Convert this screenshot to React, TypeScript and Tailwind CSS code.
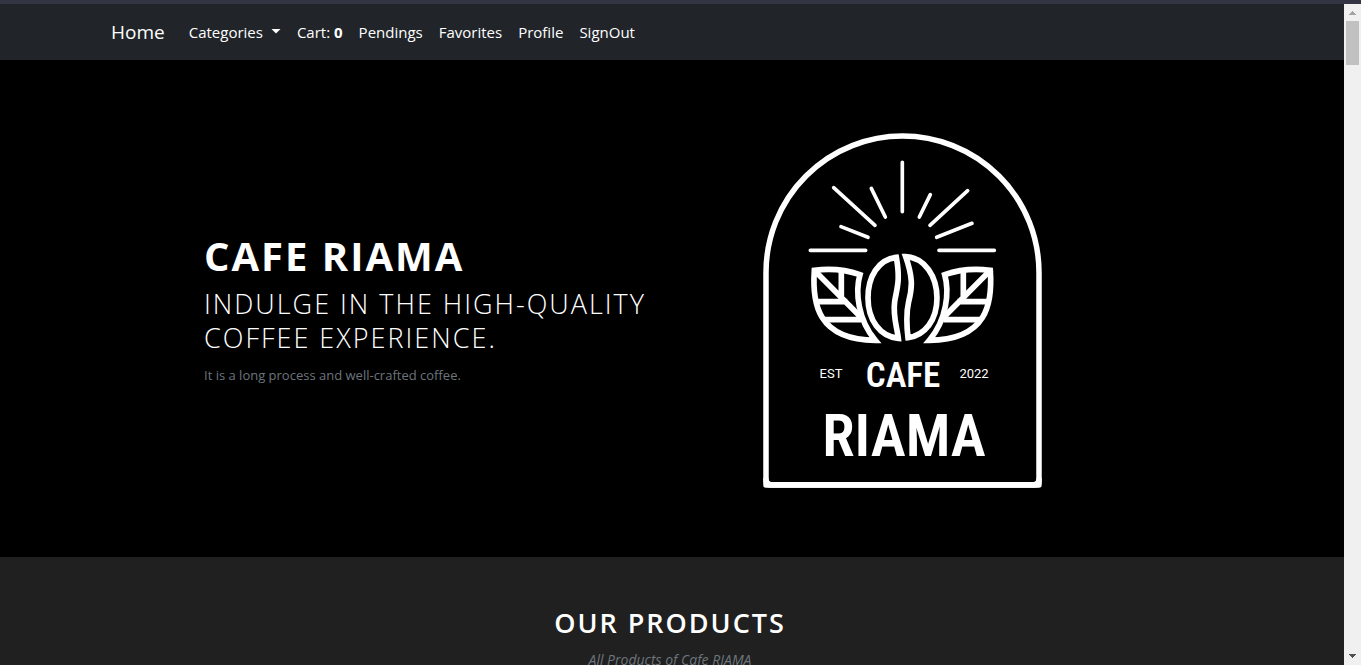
const navLinks = ["Pendings", "Favorites", "Profile", "SignOut"];

function Leaf() {
  return (
    <g>
      <path d="M43 91C95 84 140 90 180 104C165 155 174 240 226 301C52 299 36 190 43 91Z" />
      <path d="M48 96L185 234M124 92V168M52 185H142M70 239H184" />
    </g>
  );
}

function CafeLogo() {
  return (
    <svg
      viewBox="762 132 282 358"
      className="mt-1 h-[358px] w-[282px] shrink-0"
      role="img"
      aria-label="Cafe Riama, established 2022"
    >
      <path
        d="M766 481V272.5A136.5 136.5 0 0 1 1039 272.5V481Q1039 485 1035 485H770Q766 485 766 481Z"
        fill="none"
        stroke="#fff"
        strokeWidth="5.5"
      />
      <path
        d="M763.3 478V485.5Q763.3 487.700 766 487.700H1039Q1041.700 487.700 1041.700 485V478H1036.500Q1036.500 482 1033 482H772Q768.500 482 768.500 478Z"
        fill="#fff"
      />
      <g transform="translate(750 120) scale(.3333)" fill="none" stroke="#fff" strokeWidth="11" strokeLinecap="round">
        <path d="M457 127V275M251 203L375 316M364 205L406 291M541 224L508 291M653 212L540 316M273 320L354 352M666 310L560 352M181 391H347M567 391H733" />
      </g>
      <g transform="translate(800 240) scale(.3333)" fill="none" stroke="#fff" strokeWidth="17">
        <Leaf />
        <g transform="translate(614 0) scale(-1 1)">
          <Leaf />
        </g>
        <path d="M289 52C235 58 204 110 204 174C204 240 240 290 295 295C291 260 278 230 284 185C290 145 302 125 289 52Z" />
        <path d="M317 50C375 52 411 110 411 174C411 240 375 286 324 293C318 240 319 215 326 185C338 140 338 110 317 50Z" />
      </g>
      <g fill="#fff" textAnchor="middle" className="font-['Roboto_Condensed','Liberation_Sans_Narrow',sans-serif]">
        <text x="831" y="378" fontSize="13" className="font-['Roboto',sans-serif]">EST</text>
        <text x="974" y="378" fontSize="13" className="font-['Roboto',sans-serif]">2022</text>
        <text x="903" y="387" fontSize="35" fontWeight="600">CAFE</text>
        <text x="904" y="456" fontSize="59" fontWeight="600">RIAMA</text>
      </g>
    </svg>
  );
}

function Scrollbar() {
  return (
    <div aria-hidden="true" className="flex w-[17px] shrink-0 flex-col items-center justify-between bg-[#f0f0f0]">
      <div className="flex w-full flex-col items-center">
        <svg viewBox="0 0 17 17" className="size-[17px]" shapeRendering="crispEdges">
          <path d="M8 7H9V8H10V9H11V10H12V11H5V10H6V9H7V8H8Z" fill="#a3a3a3" />
        </svg>
        <div className="h-11 w-[13px] bg-[#c1c1c1]" />
      </div>
      <svg viewBox="0 0 17 17" className="size-[17px]" shapeRendering="crispEdges">
        <path d="M5 6H12V7H11V8H10V9H9V10H8V9H7V8H6V7H5Z" fill="#505050" />
      </svg>
    </div>
  );
}

export default function App() {
  return (
    <div className="flex h-screen flex-col overflow-hidden bg-[#202020] font-['Open_Sans','Noto_Sans',sans-serif] text-white">
      <div className="h-1 shrink-0 bg-[#333544]" />
      <div className="flex min-h-0 grow">
        <div className="min-w-0 grow overflow-hidden">
          <nav className="flex h-14 items-center bg-[#212529] px-[111px] text-[15px]">
            <a href="#home" className="mr-4 text-[19px]">Home</a>
            <button type="button" className="flex items-center gap-2 px-2">
              Categories
              <svg viewBox="0 0 10 5" className="mb-0.5 h-[5px] w-[10px]" aria-hidden="true">
                <path d="M0.500 0H9.500L5 4.500Z" fill="currentColor" />
              </svg>
            </button>
            <a href="#cart" className="px-2">
              Cart: <b>0</b>
            </a>
            {navLinks.map((label) => (
              <a key={label} href={`#${label.toLowerCase()}`} className="px-2">
                {label}
              </a>
            ))}
          </nav>
          <header className="flex h-[497px] items-center bg-black pl-[204px]">
            <div className="w-[558px] shrink-0 pr-20">
              <h1 className="mb-2 text-[40px] leading-[46px] font-bold tracking-[2px] uppercase">Cafe Riama</h1>
              <p className="mb-[10px] text-[27px] leading-[34px] font-light tracking-[2px] uppercase">
                Indulge in the high-quality coffee experience.
              </p>
              <p className="text-[13px] leading-5 text-[#6c757d]">It is a long process and well-crafted coffee.</p>
            </div>
            <CafeLogo />
          </header>
          <section className="bg-[#202020] pt-12 pr-1 text-center">
            <h2 className="mb-2 text-[27px] leading-9 font-semibold tracking-[2px] uppercase">Our Products</h2>
            <p className="text-[14px] leading-[22px] text-[#6c757d] italic">All Products of Cafe RIAMA</p>
          </section>
        </div>
        <Scrollbar />
      </div>
    </div>
  );
}
